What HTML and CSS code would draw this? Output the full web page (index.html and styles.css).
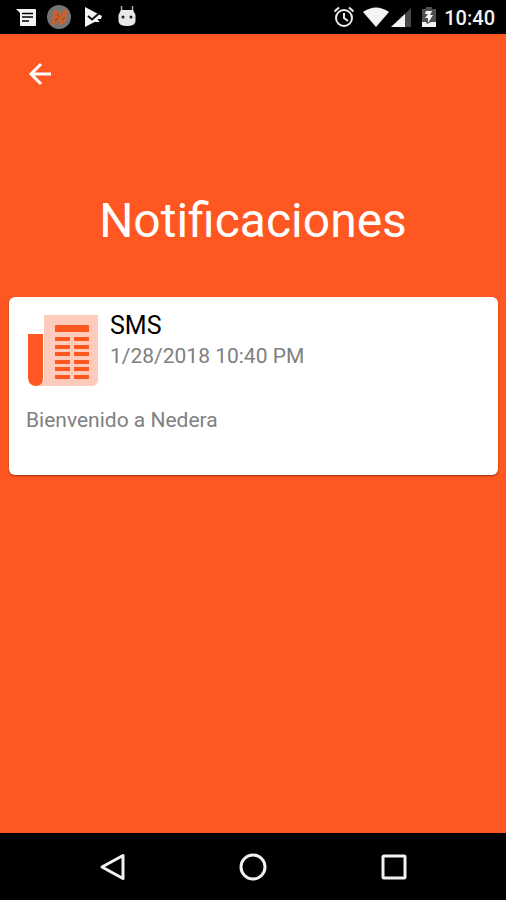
FILE: index.html
```html
<!DOCTYPE html>
<html lang="es">
<head>
<meta charset="utf-8">
<meta name="viewport" content="width=device-width, initial-scale=1">
<title>Notificaciones</title>
<link rel="stylesheet" href="styles.css">
</head>
<body>
<div class="screen">
  <div class="status-bar">
    <div class="status-left">
      <svg width="24" height="24" viewBox="0 0 24 24" aria-hidden="true">
        <path fill="#f4f4f4" d="M1 4h19a1 1 0 0 1 1 1v15a1 1 0 0 1-1 1H6a1 1 0 0 1-1-1V8z"/>
        <path fill="none" stroke="#000" stroke-width="1.500" d="M7 8.500h11M7 12h11M7 16h7"/>
      </svg>
      <svg width="24" height="24" viewBox="0 0 24 24" aria-hidden="true">
        <circle cx="12" cy="12" r="12" fill="#777573"/>
        <path fill="#cf602b" d="M6 7l5-2 4 8V7l5-3-1 13-5 3-4-8v6l-5 3z"/>
        <path fill="none" stroke="#70452f" stroke-width="1" d="M10 8l2 4M8 16l3-3M15 15l3-3"/>
      </svg>
      <svg width="24" height="24" viewBox="0 0 24 24" aria-hidden="true">
        <path fill="#f4f4f4" d="M4 2l17 9-1 3-3.500 0 2 3-5 0L4 22z"/>
        <path fill="none" stroke="#111" stroke-width="2" d="M7 11l4 3.500 8-7"/>
      </svg>
      <svg width="24" height="24" viewBox="0 0 24 24" aria-hidden="true">
        <path fill="none" stroke="#aaa" stroke-width="1.500" d="M6.500 1v6M17.500 1v6"/>
        <path fill="#e8e8e8" d="M6 5h12l2.500 5v6q0 5-8.500 5t-8.500-5v-6z"/>
        <circle cx="8" cy="12" r="1.500" fill="#222"/><circle cx="16" cy="12" r="1.500" fill="#222"/>
      </svg>
    </div>
    <div class="status-right">
      <svg width="24" height="24" viewBox="0 0 24 24" aria-hidden="true">
        <g fill="none" stroke="#eee" stroke-width="2"><circle cx="12" cy="13" r="8"/><path d="M12 8v5l4 3M2.500 6.500l4.500-4M21.500 6.500L17 2.500"/></g>
      </svg>
      <svg width="26" height="24" viewBox="0 0 26 24" aria-hidden="true">
        <path fill="#f4f4f4" d="M0 7Q13-2 26 7L13 22z"/>
      </svg>
      <svg class="signal" width="20" height="24" viewBox="0 0 20 24" aria-hidden="true">
        <path fill="#484848" d="M20 3v19H0z"/><path fill="#f4f4f4" d="M14 9v13H0z"/>
      </svg>
      <svg class="battery" width="14" height="24" viewBox="0 0 14 24" aria-hidden="true">
        <path fill="#505050" d="M4 2h6v2h4v18H0V4h4z"/>
        <path fill="#f4f4f4" d="M0 17h4l1 2 4-2h5v5H0zM4 6h6l-2 4h3l-5 8v-5H3l3-4H3z"/>
      </svg>
      <time class="clock">10:40</time>
    </div>
  </div>
  <main class="content">
    <button class="back" type="button" aria-label="Atrás">
      <svg width="24" height="24" viewBox="0 0 24 24" aria-hidden="true"><path fill="none" stroke="#fff" stroke-width="3" d="M23 12H3M13 2L3 12l10 10"/></svg>
    </button>
    <h1 class="title">Notificaciones</h1>
    <article class="card">
      <header class="card-head">
        <svg width="72" height="72" viewBox="0 0 72 72" aria-hidden="true">
          <path fill="#ffccbc" d="M16 0h54v65a6 6 0 0 1-6 6H8q8-1 8-8z"/>
          <path fill="#ff5722" d="M0 19h15v44q0 8-7 8t-8-8zM27 10h34v7H27z"/>
          <path fill="none" stroke="#ff5722" stroke-width="4" d="M27 24h15M46 24h15M27 32h15M46 32h15M27 39h15M46 39h15M27 47h15M46 47h15M27 54h15M46 54h15M27 62h15M46 62h15"/>
        </svg>
        <div>
          <h2 class="card-title">SMS</h2>
          <time class="card-date">1/28/2018 10:40 PM</time>
        </div>
      </header>
      <p class="card-text">Bienvenido a Nedera</p>
    </article>
  </main>
  <nav class="nav-bar">
    <button type="button" aria-label="Volver"><svg width="30" height="30" viewBox="0 0 30 30"><path fill="none" stroke="#f2f2f2" stroke-width="3" stroke-linejoin="round" d="M25 3.500v23L4 15z"/></svg></button>
    <button type="button" aria-label="Inicio"><svg width="30" height="30" viewBox="0 0 30 30"><circle cx="15" cy="15" r="12" fill="none" stroke="#f2f2f2" stroke-width="3"/></svg></button>
    <button type="button" aria-label="Recientes"><svg width="30" height="30" viewBox="0 0 30 30"><rect x="4" y="4" width="22" height="22" rx="1" fill="none" stroke="#f2f2f2" stroke-width="3"/></svg></button>
  </nav>
</div>
</body>
</html>
```
FILE: styles.css
```css
* { box-sizing: border-box; }
body {
  margin: 0;
  background: #ff5722;
  font-family: Roboto, "Liberation Sans", sans-serif;
}
h1, h2, p { margin: 0; font-weight: 400; }
svg { display: block; flex: none; }
button { border: 0; padding: 0; background: none; cursor: pointer; }
.screen { min-height: 100vh; display: flex; flex-direction: column; }
.status-bar {
  height: 34px;
  padding: 0 11px 0 15px;
  display: flex;
  align-items: center;
  justify-content: space-between;
  background: #000;
}
.status-left { display: flex; gap: 10px; }
.status-left svg:first-child { margin-right: -2px; }
.status-right { display: flex; align-items: center; }
.status-right svg:first-child { margin-right: 7px; }
.signal { margin-left: 2px; }
.battery { margin: 0 8px 0 11px; }
.clock { padding-top: 1px; color: #f2f2f2; font-size: 20px; line-height: 24px; font-weight: 500; }
.content { flex: 1; padding: 0 8px; }
.back { display: block; margin: 20px 0 0 12px; padding: 8px; }
.title {
  margin-top: 99px;
  color: #fff;
  font-size: 48px;
  line-height: 56px;
  text-align: center;
}
.card {
  min-height: 178px;
  margin: 48px 0 0 1px;
  padding: 15px 17px 38px;
  border-radius: 6px;
  background: #fff;
  box-shadow: 0 1px 2px rgba(0, 0, 0, 0.4);
}
.card-head { display: flex; gap: 10px; padding-left: 2px; }
.card-head svg { margin-top: 3px; }
.card-title { color: #000; font-size: 25px; line-height: 28px; }
.card-date { display: block; margin-top: 2px; color: #808080; font-size: 21px; line-height: 28px; }
.card-text { margin-top: 19px; color: #808080; font-size: 21px; line-height: 28px; }
.nav-bar {
  height: 67px;
  padding: 0 42px 0 43px;
  display: flex;
  align-items: center;
  background: #000;
}
.nav-bar button { flex: 1; display: flex; justify-content: center; }
```
